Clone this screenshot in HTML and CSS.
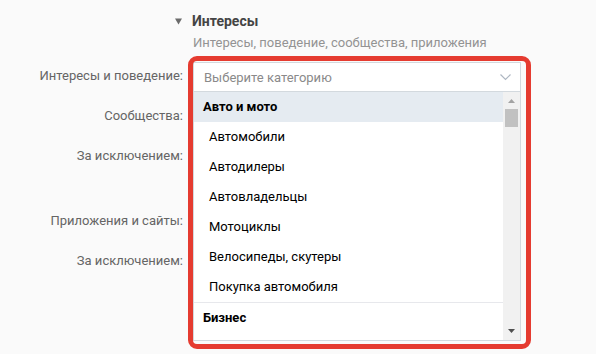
FILE: index.html
```html
<!DOCTYPE html>
<html lang="ru">
<head>
<meta charset="utf-8">
<title>Интересы</title>
<link rel="stylesheet" href="styles.css">
</head>
<body>
<div class="page">
  <div class="section-head">
    <div class="title-line">
      <svg class="caret" width="7" height="7" viewBox="0 0 7 7"><polygon points="0,0.5 7,0.5 3.5,6.5" fill="#6b6b6b"/></svg>
      <span class="title">Интересы</span>
    </div>
    <div class="subtitle">Интересы, поведение, сообщества, приложения</div>
  </div>

  <div class="form">
    <div class="label">Интересы и поведение:</div>
    <div class="field">
      <div class="picker">
        <div class="select">
          <span class="placeholder">Выберите категорию</span>
          <svg class="chevron" width="11" height="7" viewBox="0 0 11 7"><polyline points="0.5,0.5 5.5,5.5 10.5,0.5" fill="none" stroke="#aeb7c2" stroke-width="1.2"/></svg>
        </div>
        <div class="dropdown">
          <div class="list">
            <div class="group">Авто и мото</div>
            <div class="item">Автомобили</div>
            <div class="item">Автодилеры</div>
            <div class="item">Автовладельцы</div>
            <div class="item">Мотоциклы</div>
            <div class="item">Велосипеды, скутеры</div>
            <div class="item">Покупка автомобиля</div>
            <div class="group sep">Бизнес</div>
          </div>
          <div class="scrollbar">
            <svg class="arrow up" width="7" height="4" viewBox="0 0 7 4"><polygon points="0,4 7,4 3.5,0" fill="#a3a3a3"/></svg>
            <div class="thumb"></div>
            <div class="track-fill"></div>
            <svg class="arrow down" width="7" height="4" viewBox="0 0 7 4"><polygon points="0,0 7,0 3.5,4" fill="#505050"/></svg>
          </div>
        </div>
        <div class="highlight"></div>
      </div>
    </div>

    <div class="label">Сообщества:</div>
    <div class="field"><div class="blank"></div></div>

    <div class="label">За исключением:</div>
    <div class="field"><div class="blank"></div></div>

    <div class="label spaced">Приложения и сайты:</div>
    <div class="field spaced"><div class="blank"></div></div>

    <div class="label">За исключением:</div>
    <div class="field"><div class="blank"></div></div>
  </div>
</div>
</body>
</html>
```
FILE: styles.css
```css
html, body {
  margin: 0;
  padding: 0;
  background: #fafafa;
}
body {
  font-family: Roboto, "Noto Sans", Arial, sans-serif;
  font-size: 13px;
  color: #000;
  width: 596px;
  height: 354px;
  overflow: hidden;
}
.page {
  padding-top: 12px;
}
.section-head {
  margin-left: 175px;
}
.title-line {
  display: flex;
  align-items: center;
  gap: 10px;
  height: 18px;
}
.caret {
  display: block;
}
.title {
  font-weight: 700;
  font-size: 14px;
  color: #444;
  line-height: 18px;
}
.subtitle {
  margin-top: 4px;
  margin-left: 18px;
  color: #939393;
  line-height: 18px;
}
.form {
  margin-top: 10px;
  display: grid;
  grid-template-columns: 183px 328px;
  column-gap: 10px;
  row-gap: 10px;
}
.label {
  text-align: right;
  color: #656565;
  height: 30px;
  line-height: 28px;
}
.spaced {
  margin-top: 25px;
}
.blank {
  height: 30px;
}
.field {
  position: relative;
}
.picker {
  position: relative;
  z-index: 2;
}
.select {
  box-sizing: border-box;
  height: 30px;
  border: 1px solid #d3d9de;
  background: #fff;
  display: flex;
  align-items: center;
  justify-content: space-between;
  padding: 0 9px 0 10px;
}
.placeholder {
  color: #8a8a8a;
}
.chevron {
  display: block;
  margin-top: 1px;
}
.dropdown {
  position: absolute;
  top: 30px;
  left: 0;
  right: 0;
  box-sizing: border-box;
  height: 249px;
  border: 1px solid #d3d9de;
  border-top: 0;
  background: #fff;
  display: flex;
}
.list {
  flex: 1;
  overflow: hidden;
}
.group {
  height: 30px;
  line-height: 30px;
  padding-left: 9px;
  font-weight: 700;
  background: #e5ebf1;
}
.group.sep {
  background: #fff;
  border-top: 1px solid #e7e8ec;
}
.item {
  height: 30px;
  line-height: 30px;
  padding-left: 15px;
  color: #000;
}
.scrollbar {
  width: 17px;
  background: #f1f1f1;
  display: flex;
  flex-direction: column;
  align-items: center;
}
.arrow {
  display: block;
}
.arrow.up {
  margin-top: 7px;
}
.thumb {
  margin-top: 6px;
  width: 13px;
  height: 18px;
  background: #c1c1c1;
}
.track-fill {
  flex: 1;
}
.arrow.down {
  margin-bottom: 7px;
}
.highlight {
  position: absolute;
  left: -5px;
  top: -6px;
  right: -10px;
  bottom: -257px;
  border: 5px solid #e53b30;
  border-radius: 9px;
  pointer-events: none;
}
```
